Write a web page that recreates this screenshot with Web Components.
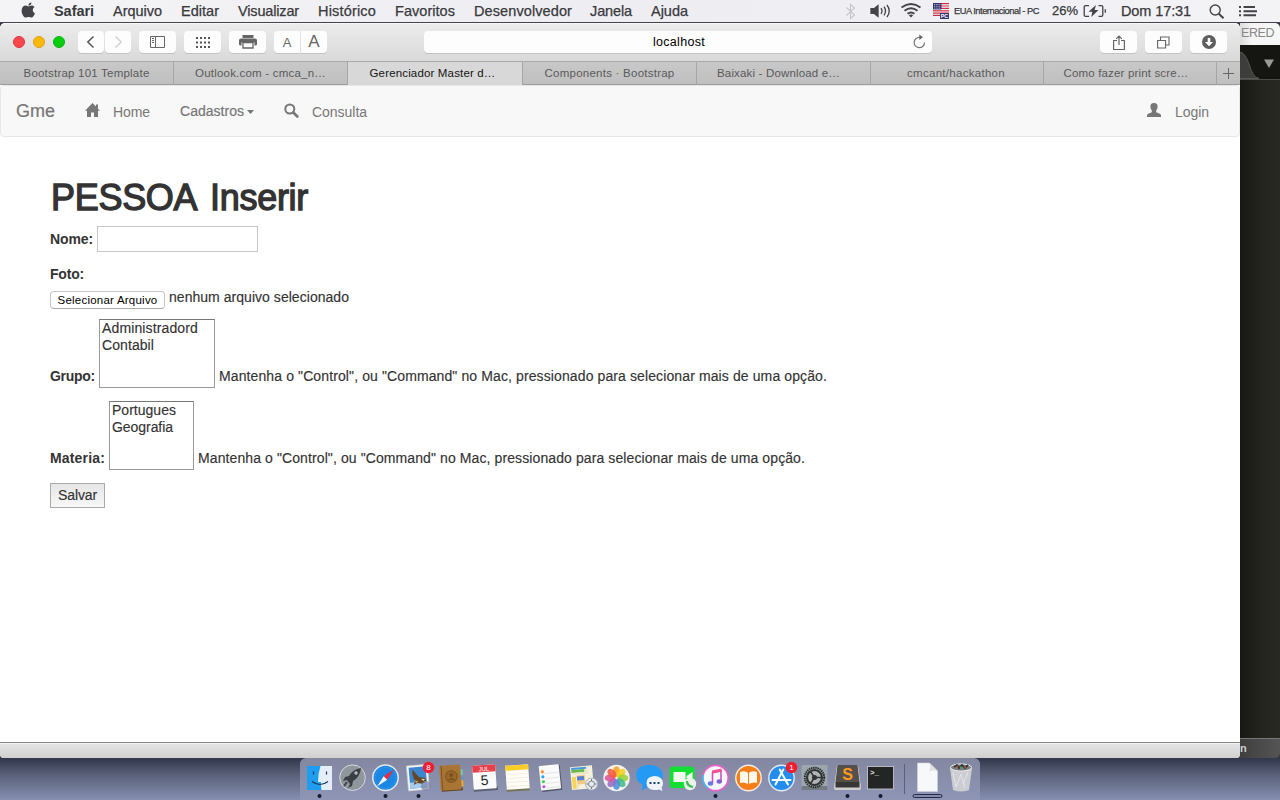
<!DOCTYPE html>
<html lang="pt">
<head>
<meta charset="utf-8">
<title>Gerenciador Master de Escola</title>
<style>
html,body{margin:0;height:100%;overflow:hidden}
body{font-family:"Liberation Sans",Arial,sans-serif;background:#8993b4}
</style>
</head>
<body>
<mac-desktop></mac-desktop>
<script>
const define = (name, css, html, ready) => {
  const tpl = document.createElement('template');
  tpl.innerHTML = `<style>:host{box-sizing:border-box}*{box-sizing:border-box}svg{display:block;flex:none}${css}</style>${html}`;
  customElements.define(name, class extends HTMLElement {
    connectedCallback() {
      if (this.shadowRoot) return;
      this.attachShadow({mode: 'open'}).append(tpl.content.cloneNode(true));
      if (ready) ready(this, this.shadowRoot);
    }
  });
};

/* Text run tracked out (or in) to an exact width given by w. */
define('ui-text', `:host{display:block;flex:none;white-space:pre}span{display:inline-block}`, `<span><slot></slot></span>`, (el, root) => {
  const w = parseFloat(el.getAttribute('w'));
  if (!w) return;
  const span = root.querySelector('span');
  span.style.letterSpacing = '0px';
  const natural = span.getBoundingClientRect().width;
  if (natural) span.style.letterSpacing = ((w - natural) / el.textContent.length) + 'px';
  el.style.width = w + 'px';
});

define('mac-menubar', `
:host{display:flex;height:23px;background:linear-gradient(90deg,#f4f4f6,#ededf2 50%,#f3f3f6);border-bottom:1px solid #45454b;color:#39393c;padding-left:21px;font-size:14.5px;line-height:22px;-webkit-text-stroke:.25px #39393c}
nav{display:flex;gap:19px;margin-left:18px}
.b{font-weight:700;-webkit-text-stroke:0}
.s{display:flex;margin-left:auto;align-items:flex-start}
`, `
<svg width="15" height="22" viewBox="0 0 15 22" fill="#444448"><path d="M10.4 2.400c.2 1.700-1.300 3.200-3 3.200-.2-1.600 1.200-3.100 3-3.200zM7.600 6.400c.8 0 1.500-.9 3-.9 1 0 2.200.5 3 1.600-2.600 1.600-2.200 5 .4 6.200-.7 1.900-2 4.300-3.500 4.300-1.200 0-1.500-.7-2.800-.7s-1.700.7-2.800.7C2.700 17.600.6 13.800.6 10.700c0-3.300 2.100-5.100 4.100-5.100 1.300 0 2.200.8 2.900.8z"/></svg>
<nav><ui-text class="b" w="40">Safari</ui-text><ui-text w="49">Arquivo</ui-text><ui-text w="38">Editar</ui-text><ui-text w="61">Visualizar</ui-text><ui-text w="58">Histórico</ui-text><ui-text w="60">Favoritos</ui-text><ui-text w="98">Desenvolvedor</ui-text><ui-text w="42" style="margin-left:-1px">Janela</ui-text><ui-text w="37">Ajuda</ui-text></nav>
<div class="s">
<svg width="11" height="22" viewBox="0 0 11 22" style="margin-right:14px" fill="none" stroke="#c6c6ca" stroke-width="1.100"><path d="M1.500 7.500l8 7.500-4 3.500v-14l4 3.500-8 7.500"/></svg>
<svg width="22" height="22" viewBox="0 0 22 22" style="margin-right:8px" fill="none" stroke="#444448" stroke-width="1.300"><path d="M1 8.700h3l4-3.200v11l-4-3.200H1z" fill="#444448"/><path d="M11 8.200q2 2.800 0 5.600M14 6.700q3 4.300 0 8.600M17 5q4.500 6 0 12"/></svg>
<svg width="22" height="22" viewBox="0 0 22 22" style="margin-right:11px" fill="none" stroke="#444448" stroke-width="1.900"><path d="M1.500 7.500q9.500-7 19 0M4.500 10.700q6.500-5 13 0M7.500 13.800q3.500-2.600 7 0"/><path d="M8.800 15.300q2.200-1.500 4.400 0L11 17.600z" fill="#444448" stroke="none"/></svg>
<svg width="16" height="22" viewBox="0 0 16 22" style="margin-right:5px"><path fill="#fff" d="M0 3h16v13H0z"/><path stroke="#c92b3f" stroke-width="1.200" d="M0 3.600h16M0 6h16M0 8.400h16M0 10.800h16M0 13.200h16M0 15.400h16"/><path fill="#34346f" d="M0 3h8.500v6.500H0zM7 13h9v6H7z"/><path d="M1 4.500h7M1 6.300h7M1 8.100h7" stroke="#fff" stroke-width=".8" stroke-dasharray=".8 1"/><text x="7.700" y="18.200" font-size="5.500" font-weight="700" fill="#fff" stroke="none">PC</text></svg>
<ui-text w="85" style="font-size:9.300px;margin-right:13px;line-height:23px">EUA Internacional - PC</ui-text>
<ui-text w="26" style="font-size:13px;margin-right:5px">26%</ui-text>
<svg width="24" height="22" viewBox="0 0 24 22" style="margin-right:14px" fill="none" stroke="#444448" stroke-width="1.300"><path d="M6 5.700H2.500Q1.200 5.700 1.200 7v8q0 1.300 1.300 1.300H6M15.500 5.700h3q1.300 0 1.300 1.300v8q0 1.300-1.300 1.300h-3"/><path d="M22.300 9.300v3.500"/><path d="M13 5l-7.500 6.800h3.800L8.300 17l7.200-7h-3.900z" fill="#444448" stroke="none"/></svg>
<ui-text w="70" style="margin-right:18px">Dom 17:31</ui-text>
<svg width="16" height="22" viewBox="0 0 16 22" style="margin-right:14px" fill="none" stroke="#444448"><circle cx="6.200" cy="10" r="5" stroke-width="1.400"/><path d="M9.800 13.700l4.700 4.500" stroke-width="2"/></svg>
<svg width="18" height="22" viewBox="0 0 18 22" style="margin-right:23px" stroke="#444448" stroke-width="1.900"><path d="M0 7h2M0 11.200h2M0 15.300h2M4.500 7H16M4.500 11.200H18M4.500 15.300H17"/></svg>
</div>`);

define('tool-button', `:host{display:flex;align-items:center;justify-content:center;height:22px;width:37px;background:#fdfdfd;border-radius:4px;box-shadow:0 1px 0 #c3c3c3;color:#666;flex:none}`, `<slot></slot>`);

define('browser-toolbar', `
:host{display:flex;height:38px;padding:7px 13px 0;align-items:flex-start;background:linear-gradient(#ececec,#d9d9d9);border-top:1px solid #f8f8f8;border-radius:5px 5px 0 0}
.l{display:flex;gap:8px;margin-right:13px;height:22px;align-items:center}
.l i{width:12px;height:12px;border-radius:50%;border:1px solid #e63341;background:#fc474b}
.l i+i{border-color:#dda01c;background:#fdb904}.l i+i+i{border-color:#0fae16;background:#02ce0d}
tool-button{margin-right:8px}
.n{width:26px;margin-right:1px}.f{width:26px;margin-right:8px}
.a{display:flex;width:508px;height:22px;border-radius:4px;background:#fdfdfd;box-shadow:0 1px 0 #c3c3c3;margin:0 168px 0 97px;font-size:12.500px;line-height:23px;color:#000}
.a ui-text{margin-left:229px}.a svg{margin-left:auto;margin-right:5px}
`, `
<div class="l"><i></i><i></i><i></i></div>
<tool-button class="n"><svg width="10" height="14" viewBox="0 0 10 14" fill="none" stroke="#555" stroke-width="1.500"><path d="M7.500 1.500L1.800 7l5.700 5.500"/></svg></tool-button>
<tool-button class="f"><svg width="10" height="14" viewBox="0 0 10 14" fill="none" stroke="#ccc" stroke-width="1.200"><path d="M2.500 1.500L8.200 7l-5.700 5.500"/></svg></tool-button>
<tool-button><svg width="15" height="12" viewBox="0 0 15 12" fill="none" stroke="#666"><path d="M.5.500h14v11H.500zM5.500.500v11M2 2.500h2M2 4.500h2M2 6.500h2"/></svg></tool-button>
<tool-button><svg width="14" height="11" viewBox="0 0 14 11" stroke="#555" stroke-width="2" stroke-dasharray="2 2"><path d="M0 1h14M0 5.500h14M0 10h14"/></svg></tool-button>
<tool-button><svg width="18" height="14" viewBox="0 0 18 14" fill="#666"><path d="M3.500 0h11v3h-11zM2 3.500h14q2 0 2 2V9q0 1.500-1.500 1.500h-1v-3h-13v3h-1Q0 10.500 0 9V5.500q0-2 2-2z"/><path d="M4 7.500h10V13H4z" fill="#fff" stroke="#666" stroke-width="1.300"/></svg></tool-button>
<tool-button style="width:26px;margin-right:1px;border-radius:4px 0 0 4px"><ui-text style="font-size:13px">A</ui-text></tool-button>
<tool-button style="width:26px;margin-right:0;border-radius:0 4px 4px 0"><ui-text style="font-size:17px">A</ui-text></tool-button>
<div class="a"><ui-text w="52">localhost</ui-text><svg width="15" height="22" viewBox="0 0 15 22" fill="none" stroke="#777" stroke-width="1.200"><path d="M12.500 11.500A5.200 5.200 0 1 1 7.500 6.300h2"/><path d="M7.300 3.500l3.600 2.800-3.600 2.800z" fill="#666" stroke="none"/></svg></div>
<tool-button><svg width="12" height="15" viewBox="0 0 12 15" fill="none" stroke="#666" stroke-width="1.200"><path d="M4 5.500H.600v9h10.800v-9H8M6 10V1.200M3.200 3.900L6 1l2.800 2.900"/></svg></tool-button>
<tool-button><svg width="13" height="13" viewBox="0 0 13 13" fill="none" stroke="#666" stroke-width="1.100"><path d="M.600 4.500h8v7.500h-8zM3.500 4.500V1h8.500v8H8.800"/></svg></tool-button>
<tool-button style="margin:0"><svg width="14" height="14" viewBox="0 0 14 14"><circle cx="7" cy="7" r="7" fill="#5e5e5e"/><path d="M5.700 3h2.600v4H11l-4 4.200L3 7h2.700z" fill="#fff"/></svg></tool-button>`);

define('browser-tabs', `
:host{display:grid;grid-template-columns:174px 174px 175px 174px 174px 173px 173px 23px;height:24px;border-top:1px solid #a9a9a9;border-bottom:1px solid #9c9c9c;background:linear-gradient(#c8c8c8,#bfbfbf);font-size:11.500px;line-height:23px;color:#5a5a5a}
div{display:flex;justify-content:center;border-right:1px solid #a6a6a6}
div:nth-of-type(3){background:#d8d8d8;color:#161616}
div:last-of-type{border:0;align-items:center}
`, `
<div><ui-text w="126">Bootstrap 101 Template</ui-text></div><div><ui-text w="131">Outlook.com - cmca_n…</ui-text></div><div><ui-text w="126" style="margin-right:5px">Gerenciador Master d…</ui-text></div><div><ui-text w="130">Components · Bootstrap</ui-text></div><div><ui-text w="123" style="margin-right:10px">Baixaki - Download e…</ui-text></div><div><ui-text w="98" style="margin-right:2px">cmcant/hackathon</ui-text></div><div><ui-text w="125" style="margin-right:8px">Como fazer print scre…</ui-text></div>
<div><svg width="11" height="11" viewBox="0 0 11 11" stroke="#666"><path d="M0 5.500h11M5.500 0v11"/></svg></div>`);

define('site-navbar', `
:host{display:flex;height:52px;background:#f8f8f8;border:1px solid #e7e7e7;border-radius:4px;padding:15px 30px 0 15px;font-size:14px;line-height:20px;color:#777}
ui-text{height:20px}
.m{margin-top:1px}
svg{margin-top:1px}
`, `
<ui-text w="39" style="font-size:18px;margin-right:30px;-webkit-text-stroke:.2px">Gme</ui-text>
<svg width="15" height="20" viewBox="0 0 15 20" style="margin-right:13px" fill="#777"><path d="M7.500 1L0 8.700h2V15h4v-4.500h3V15h4V8.700h2l-2-2V2.500h-2v2z"/></svg>
<ui-text class="m" w="37" style="margin-right:30px">Home</ui-text>
<ui-text w="64" style="margin-right:3px;-webkit-text-stroke:.2px">Cadastros</ui-text>
<svg width="7" height="20" viewBox="0 0 7 20" style="margin-right:30px"><path d="M0 8h7L3.500 12z" fill="#777"/></svg>
<svg width="15" height="20" viewBox="0 0 15 20" style="margin-right:13px" fill="none" stroke="#777"><circle cx="5.800" cy="7" r="4.500" stroke-width="2"/><path d="M9.300 10.500l4 4" stroke-width="2.600" stroke-linecap="round"/></svg>
<ui-text class="m" w="55">Consulta</ui-text>
<svg width="14" height="20" viewBox="0 0 14 20" style="margin:1px 14px 0 auto" fill="#777"><path d="M7 1c2.800 0 3.800 1.600 3.600 4-.1 1.500-.7 2.600-1.400 3.500v1.800l3 1.200q1.800.7 1.800 1.700V15H0v-1.800q0-1 1.800-1.700l3-1.200V8.500C4.100 7.600 3.500 6.500 3.400 5 3.200 2.600 4.200 1 7 1z"/></svg>
<ui-text class="m" w="34">Login</ui-text>`);

define('option-list', `:host{display:block;height:69px;border:1px solid #999;border-top-color:#777;padding:0 2px;line-height:17px;background:#fff;flex:none}`, `<slot></slot>`);
define('form-row', `:host{display:flex;gap:4px}:host([end]){align-items:flex-end;height:69px}:host([end]) ::slotted(ui-text){margin-bottom:2px}`, `<slot></slot>`);

define('person-form', `
:host{display:block;padding:41px 50px 0;font-size:14px;line-height:20px;color:#333}
h1{margin:0;padding-left:1px;font-size:36px;font-weight:400;line-height:40px;height:40px;word-spacing:5px;-webkit-text-stroke:1.300px #333}
.b{font-weight:700}
.t{-webkit-text-stroke:.15px #333}
input{width:161px;height:26px;border:1px solid #c8c8c8;margin:0;padding:0;outline:0}
.file{display:flex;justify-content:center;width:115px;height:18px;margin:4px 0 0;padding:0;border:1px solid #c6c6c6;border-bottom-color:#adadad;border-radius:4px;background:#fff;font:11.500px/16px "Liberation Sans",sans-serif;color:#000}
.save{display:flex;justify-content:center;width:55px;height:25px;border:1px solid #aaa;background:linear-gradient(#e6e6e6,#f7f7f7);font:14px/23px "Liberation Sans",sans-serif;color:#333;margin:13px 0 0;padding:0}
`, `
<h1><ui-text w="257">PESSOA Inserir</ui-text></h1>
<form-row style="margin-top:8px;align-items:center"><ui-text class="b" w="43">Nome:</ui-text><input></form-row>
<form-row style="margin-top:12px"><ui-text class="b" w="34">Foto:</ui-text></form-row>
<form-row style="margin-top:3px;height:22px"><button class="file"><ui-text w="100">Selecionar Arquivo</ui-text></button><ui-text class="t" w="180">nenhum arquivo selecionado</ui-text></form-row>
<form-row end style="margin-top:10px"><ui-text class="b" w="45">Grupo:</ui-text><option-list style="width:116px"><ui-text class="t" w="96">Administradord</ui-text><ui-text class="t" w="52">Contabil</ui-text></option-list><ui-text class="t" w="608">Mantenha o "Control", ou "Command" no Mac, pressionado para selecionar mais de uma opção.</ui-text></form-row>
<form-row end style="margin-top:13px"><ui-text class="b" w="55">Materia:</ui-text><option-list style="width:85px"><ui-text class="t" w="64">Portugues</ui-text><ui-text class="t" w="61">Geografia</ui-text></option-list><ui-text class="t" w="607">Mantenha o "Control", ou "Command" no Mac, pressionado para selecionar mais de uma opção.</ui-text></form-row>
<button class="save"><ui-text class="t" w="39">Salvar</ui-text></button>`);

define('browser-window', `
:host{display:flex;flex-direction:column;width:1240px;height:735px;background:#fff;border-radius:5px 5px 4px 4px;overflow:hidden}
main{flex:1}
footer{height:16px;background:linear-gradient(#e4e4e4,#d0d0d0);border-top:1px solid #858585;box-shadow:inset 0 1px #f0f0f0}
`, `<browser-toolbar></browser-toolbar><browser-tabs></browser-tabs><site-navbar></site-navbar><main><person-form></person-form></main><footer></footer>`);

define('editor-window', `
:host{display:flex;flex-direction:column;width:40px;height:735px;overflow:hidden;border-radius:0 5px 5px 0;background:#272822}
header{height:22px;background:linear-gradient(90deg,#dcdcdc,#f6f6f6 12px);display:flex;padding:0 0 0 1px;font-size:12.500px;line-height:21px;color:#888}
.e{flex:1;background:linear-gradient(90deg,#181914,#25261f 65%,#282923)}
footer{height:20px;background:linear-gradient(90deg,#3f3f3f,#555);border-top:1px solid #777;color:#ccc;font-size:11px;line-height:19px;font-weight:700}
`, `<header><ui-text w="33">ERED</ui-text></header>
<svg width="40" height="35" viewBox="0 0 40 35"><path fill="#151612" d="M0 0h40v35H0z"/><path fill="#3d3d3b" stroke="#575755" d="M-1 7q6 0 10 12 4 14 10 14.500H-1z"/><path stroke="#4b4c46" d="M0 34.500h40"/><path fill="#999" d="M24 14.500h10L29 23z"/></svg>
<div class="e"></div><footer><ui-text>n</ui-text></footer>`);

/* Dock artwork, each drawn in a 33x42 cell centred on (16.5, 20). */
const petals = ['#ff9f1c','#f4cf20','#9ed036','#42bd87','#4b91d8','#9a6bc4','#e0529a','#f25b41'].map((c, i) => `<ellipse cx="16.500" cy="13.500" rx="3.600" ry="5.300" fill="${c}" opacity=".88" transform="rotate(${i * 45} 16.500 20)"/>`).join('');
const art = {
finder:`<path fill="#1e9df1" d="M4 8h25v24H4z"/><path fill="#e5edf6" d="M17.500 8H29v24H18.500q-.7-4-.6-8H15q.2-9 2.500-16z"/><path d="M10.500 13.500v3M23.500 13.500v3M9 23.500q8 6 16 0" fill="none" stroke="#173b61" stroke-width="1.200"/>`,
rocket:`<circle cx="16.500" cy="19.700" r="12.800" fill="#8f979c" stroke="#d7dadd"/><path d="M25 10q-8 1-12 8l-4 1-2 4 4-1 3 4-2 4 4-2 1-5q7-4 8-13z" fill="#3a3f45"/><circle cx="20" cy="15" r="1.700" fill="#b9bec2"/><path d="M11 24l-3 4" stroke="#444" stroke-width="2"/>`,
safari:`<circle cx="16.500" cy="19.700" r="12.700" fill="#1c86e4" stroke="#e3e9ee" stroke-width="1.500"/><circle cx="16.500" cy="20" r="10.500" fill="none" stroke="#6fc0fa" stroke-dasharray="1 1.500" stroke-width=".6"/><path d="M25 11.500l-6.800 10.300-3.500-3.500z" fill="#f1293a"/><path d="M8 28.500l6.700-10.200 3.500 3.500z" fill="#f2f4f6"/>`,
mail:`<g transform="rotate(-5 16.500 20)"><path fill="#f7f7f7" stroke="#c8ccd4" stroke-width=".7" d="M5.500 7h21v25h-21z"/><path fill="#3d86cf" d="M7.500 9h17v21h-17z"/><path fill="#a5cbed" d="M7.500 24h17v6h-17z"/><path d="M11 11l6 8 6 1.500 1 3-4 2.500-5-1-4 1.500 2-4q-3-4-2-11.500z" fill="#654626"/><path d="M19 21l4 .5-2 2z" fill="#e9d8ae"/><path d="M12 22l4 1-2 2z" fill="#c6a04e"/></g><circle cx="24" cy="28" r="5" fill="#777c9f" opacity=".65"/>`,
contacts:`<g transform="rotate(-4 16.500 20)"><path fill="#70cfb9" d="M25 12h3v6h-3z"/><path fill="#5795dd" d="M25 18h3v5h-3z"/><path fill="#e9aa37" d="M25 23h3v6h-3z"/><path fill="#5e411e" d="M6 30h21v3H6z"/><rect x="5" y="7" width="21" height="25" rx="1.500" fill="#a87534"/><path d="M7 7v25" stroke="#825420"/><circle cx="16.500" cy="18.500" r="5.800" fill="#9a6829" stroke="#7d521e"/><circle cx="16.500" cy="17" r="2" fill="#765020"/><path d="M12.800 22q3.700-4 7.400 0" fill="#765020"/></g>`,
cal:`<g transform="rotate(-4 16.500 20)"><path d="M5 29h24v4H5z" fill="#596070"/><rect x="5" y="7" width="23" height="24" rx="1" fill="#fafafa"/><path d="M5 7h23v7H5z" fill="#e8404b"/><text x="16.500" y="13" font-size="6" text-anchor="middle" fill="#fff">JUL</text><text x="16.500" y="27" font-size="14" text-anchor="middle" fill="#222">5</text></g>`,
notes:`<g transform="rotate(-4 16.500 20)"><path d="M5 8h23v25H5z" fill="#77745c"/><path d="M5 7h23v24H5z" fill="#fffdf6"/><path d="M5 7h23v5H5z" fill="#f9cc28"/><path d="M5 16h23M5 20h23M5 24h23M5 28h23" stroke="#ece8df" stroke-width=".7"/></g>`,
rem:`<g transform="rotate(-6 16.500 20)"><rect x="7" y="8" width="20" height="25" fill="#55586c"/><rect x="6" y="7" width="20" height="24.500" rx="1" fill="#fafafa"/><path d="M11 15h14M11 20h14M11 25h14M11 29.500h14" stroke="#ddd" stroke-width=".7"/><circle cx="9" cy="13" r="1.600" fill="#ff8b25"/><circle cx="9" cy="18" r="1.600" fill="#27a6f2"/><circle cx="9" cy="23" r="1.600" fill="#45cf48"/><circle cx="9" cy="28" r="1.600" fill="#c54eea"/></g>`,
maps:`<g transform="rotate(-5 16.500 20)"><path fill="#f5f1df" d="M4 8h22v23H4z"/><path fill="#68b94b" d="M5 11h13v3H5z"/><path fill="#4799df" d="M5 9h15v2H5z"/><path fill="#f6d454" d="M5 18h4v12H5z"/><path d="M9 30L22 9M6 15h16" stroke="#ece5c8" stroke-width="2"/><path fill="#f2c883" d="M10 17h8v9h-8z"/><path fill="#5a7fd0" d="M10 18h7v4h-7z"/></g><circle cx="24.500" cy="26" r="6" fill="#e8ebee" stroke="#aeb4bb"/><circle cx="24.500" cy="26" r="3" fill="none" stroke="#7e878f"/><path d="M24.500 21v2M24.500 29v2M19.500 26h2M27.500 26h2" stroke="#777"/>`,
photos:`<circle cx="16.500" cy="20" r="13.200" fill="#f2f1ee"/>${petals}`,
msg:`<path fill="#249af5" d="M16.500 7c7.500 0 13.500 4.700 13.500 10.500S24 28.500 15 28q-3 4-7 4 2-2 1.500-5.500Q3 23.500 3 17.500 3 7 16.500 7z"/><path fill="#f0f4f9" d="M21.500 18c5 0 8.500 3 8.500 7 0 2-.8 3.500-1.500 4.500l1 3.500-3.500-1.500q-2 .6-4.500.5-8-.5-8-7t8-7z"/><path stroke="#19416f" stroke-width="2.200" d="M16.500 25h2M20.500 25h2M24.500 25h2"/>`,
ft:`<rect x="3.500" y="8.500" width="25" height="21.500" rx="3.500" fill="#12df32"/><path fill="#f3f7f2" d="M7.500 14h12v10h-12zM20.500 18l6-4v9l-6-3z"/><circle cx="24" cy="26" r="6.200" fill="#eaf2e9"/><path d="M21 23q0 5 6 6" stroke="#3abb4f" stroke-width="2.200" fill="none"/>`,
music:`<circle cx="16.500" cy="20" r="12.700" fill="#f9f8fc" stroke="#e861c9" stroke-width="1.700"/><path d="M4 17a13 13 0 0 0 5 13" fill="none" stroke="#39bff2" stroke-width="1.700"/><path d="M22 13l-8.500 1.700v10M22 12v11" fill="none" stroke="#cc51c5" stroke-width="1.600"/><path d="M13 12.500l9.500-2v3l-9.500 2z" fill="#f45191"/><ellipse cx="11.500" cy="25.500" rx="2.700" ry="2.200" fill="#657be3"/><ellipse cx="20.300" cy="23.500" rx="2.700" ry="2.200" fill="#8065d5"/>`,
books:`<circle cx="16.500" cy="20" r="12.700" fill="#f77d16" stroke="#f5ece5" stroke-width="1.400"/><path fill="#fff8ed" d="M8 14q5-2 8 .8V26q-4-2.500-8-1zM25 14q-5-2-8 .8V26q4-2.500 8-1z"/>`,
store:`<circle cx="16.500" cy="20" r="12.700" fill="#238def" stroke="#e4eaf2" stroke-width="1.400"/><path d="M18.300 11.500L10.500 26.500M14.700 11.500l8.300 15M7.500 22h18" stroke="#f8fbfe" stroke-width="2" stroke-linecap="round"/>`,
prefs:`<rect x="3.500" y="7" width="26" height="25" rx="1" fill="#9ca7ac"/><path fill="#747b80" d="M3.500 28h26v4h-26z"/><circle cx="16.500" cy="19.500" r="9.700" fill="#b0b3b4" stroke="#292c2e" stroke-width="2" stroke-dasharray="1.500 .7"/><circle cx="16.500" cy="19.500" r="7.500" fill="none" stroke="#303335" stroke-width="2.200"/><circle cx="16.500" cy="19.500" r="2.500" fill="#303335"/><path d="M16.500 19.500h7M16.500 19.500l-4 6M16.500 19.500l-4-6" stroke="#303335" stroke-width="1.500"/>`,
sub:`<path fill="#cfcfcf" d="M6 7h21l3 22q0 3-1 3H4q-1 0-1-3z"/><path fill="#55504c" d="M6.500 7h20l2 17h-24z"/><path fill="#383735" d="M4.500 24h24v5.500h-24z"/><text x="16.500" y="21.500" font-size="16" font-weight="700" text-anchor="middle" fill="#ff9b22">S</text>`,
term:`<rect x="3.500" y="8.500" width="26" height="22.500" fill="#242525" stroke="#c3c4c6" stroke-width=".9"/><text x="6" y="17" font-size="7.500" font-weight="700" font-family="Liberation Mono,monospace" fill="#ececec">&gt;_</text>`,
file:`<path fill="#f7f8f9" stroke="#d2d4da" stroke-width=".6" d="M6.500 5h12l8 8v20.500h-20z"/><path d="M18.500 5q1.500 5-.5 8.500 4-2 8.500-.5z" fill="#dddfe2"/>`,
trash:`<path fill="#cfd1d5" opacity=".95" d="M6 10h22l-3 22q-8 3-16 0z"/><path stroke="#eceef0" fill="none" d="M9 14l3 15 5-13 4 14M24 14l-5 12" opacity=".7"/><ellipse cx="17" cy="9.500" rx="10.500" ry="3.600" fill="#7b8081" stroke="#eceeef"/><path d="M10 9l3-2 2 3 3-3 3 3 3-3" stroke="#2d3933" stroke-width="1.800" fill="none"/><path d="M12 10l2-2M20 8l2 2" stroke="#c94a46" stroke-width="1.500"/><path d="M16 9l2 1" stroke="#36ad75" stroke-width="1.500"/>`
};
define('dock-icon', `:host{display:block;width:33px;height:42px;flex:none}`, `<svg width="33" height="42" viewBox="0 0 33 42"></svg>`, (el, root) => {
  let s = art[el.getAttribute('kind')] || '';
  if (el.hasAttribute('running')) s += '<circle cx="16.500" cy="38" r="2" fill="#151a2e"/>';
  if (el.hasAttribute('badge')) s += `<circle cx="26.500" cy="9.500" r="5.700" fill="#f01c32"/><text x="26.500" y="12.300" font-size="8" text-anchor="middle" fill="#fff">${el.getAttribute('badge')}</text>`;
  if (el.hasAttribute('minimized')) s += '<rect x="2" y="36.500" width="29" height="3" rx="1.500" fill="#828bac" stroke="#252b45"/>';
  root.querySelector('svg').innerHTML = s;
});
define('mac-dock', `:host{display:flex;width:680px;height:42px;padding:0 3px;background:linear-gradient(#8387a0,#8e95b6);border-radius:6px 6px 0 0}i{width:1px;height:30px;margin:6px 6px 0 7px;background:#5c617b}`, `
<dock-icon kind="finder" running></dock-icon><dock-icon kind="rocket"></dock-icon><dock-icon kind="safari" running></dock-icon><dock-icon kind="mail" running badge="8"></dock-icon><dock-icon kind="contacts"></dock-icon><dock-icon kind="cal"></dock-icon><dock-icon kind="notes"></dock-icon><dock-icon kind="rem"></dock-icon><dock-icon kind="maps"></dock-icon><dock-icon kind="photos"></dock-icon><dock-icon kind="msg"></dock-icon><dock-icon kind="ft"></dock-icon><dock-icon kind="music" running></dock-icon><dock-icon kind="books"></dock-icon><dock-icon kind="store" badge="1"></dock-icon><dock-icon kind="prefs"></dock-icon><dock-icon kind="sub" running></dock-icon><dock-icon kind="term" running></dock-icon><i></i><dock-icon kind="file" minimized></dock-icon><dock-icon kind="trash"></dock-icon>`);

define('mac-desktop', `
:host{display:grid;grid-template-rows:23px 735px 42px;width:1280px;height:800px;background:#33374a}
.w{display:flex}
.d{display:flex;justify-content:center;background:linear-gradient(#31364a,#596079 40%,#858fb1)}
`, `<mac-menubar></mac-menubar><div class="w"><browser-window></browser-window><editor-window></editor-window></div><div class="d"><mac-dock></mac-dock></div>`);
</script>
</body>
</html>
